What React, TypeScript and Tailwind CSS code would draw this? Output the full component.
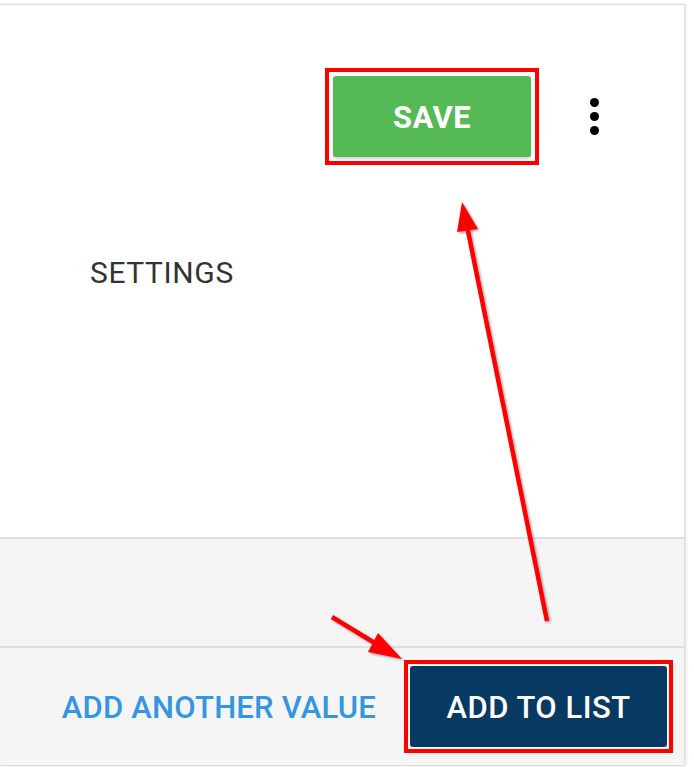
import React from "react";

const FONT = "font-['Roboto','Liberation_Sans',sans-serif]";

function Kebab() {
  return (
    <div className="flex flex-col items-center gap-[5px] w-[10px]">
      <span className="block w-[9px] h-[9px] rounded-full bg-black" />
      <span className="block w-[9px] h-[9px] rounded-full bg-black" />
      <span className="block w-[9px] h-[9px] rounded-full bg-black" />
    </div>
  );
}

/* red annotation arrows drawn over the screenshot */
function Arrows() {
  return (
    <svg
      className="absolute inset-0 pointer-events-none"
      width={694}
      height={767}
      viewBox="0 0 694 767"
    >
      <defs>
        <filter id="sh" x="-20%" y="-20%" width="140%" height="140%">
          <feDropShadow dx="1.5" dy="1.5" stdDeviation="1" floodColor="#000" floodOpacity="0.35" />
        </filter>
      </defs>
      <g filter="url(#sh)" fill="#ff0000" stroke="#ff0000">
        <line x1={547} y1={621} x2={467} y2={226} strokeWidth={4.5} />
        <polygon points="462,202 457,232 478,229" stroke="none" />
        <line x1={332} y1={617} x2={378} y2={645} strokeWidth={4.5} />
        <polygon points="402,659 368,652 378,633" stroke="none" />
      </g>
    </svg>
  );
}

export default function App() {
  return (
    <div className={`relative w-[694px] h-[767px] overflow-hidden bg-white pt-[4px] ${FONT}`}>
      <div className="w-[685px] h-[762px] flex flex-col bg-white border-t border-r border-b border-[#dcdcdc] shadow-[1px_0_3px_rgba(0,0,0,0.12)]">
        {/* main content */}
        <div className="h-[532px] flex flex-col">
          <div className="flex items-center justify-end pt-[63px] pr-[85px]">
            <div className="border-4 border-[#ff0000] p-1">
              <button className="block w-[198px] h-[81px] pt-[4px] rounded-[3px] bg-[#55b955] text-white text-[31px] font-bold tracking-[0.4px] shadow-[0_2px_3px_rgba(0,0,0,0.18)]">
                SAVE
              </button>
            </div>
            <div className="ml-[50px]">
              <Kebab />
            </div>
          </div>
          <div className="pl-[90px] pt-[90px] text-[30px] leading-[36px] text-[#333333] tracking-[0.6px]">
            SETTINGS
          </div>
        </div>

        {/* empty grey band */}
        <div className="h-[109px] bg-[#f5f5f5] border-t-2 border-[#dedede]" />

        {/* footer actions */}
        <div className="flex-1 bg-[#f5f5f5] border-t-2 border-[#dedede] flex items-center justify-end pr-[11px]">
          <button className="pt-[4px] text-[31px] font-medium text-[#3595e0] tracking-[0.2px] mr-[28px]">
            ADD ANOTHER VALUE
          </button>
          <div className="border-4 border-[#ff0000] p-[2px]">
            <button className="block w-[257px] h-[81px] pt-[4px] rounded-[3px] bg-[#073a62] text-white text-[31px] font-medium tracking-[0.5px]">
              ADD TO LIST
            </button>
          </div>
        </div>
      </div>
      <Arrows />
    </div>
  );
}
